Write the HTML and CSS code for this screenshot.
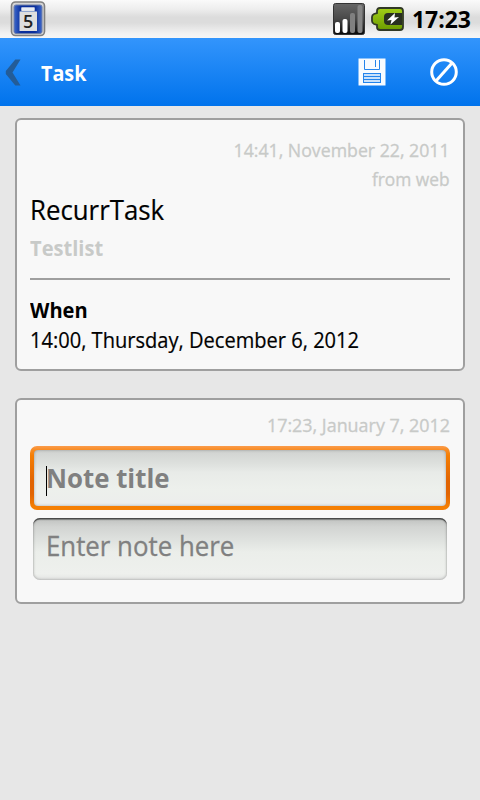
FILE: index.html
```
<!DOCTYPE html>
<html lang="en">
<head>
<meta charset="utf-8">
<title>Task</title>
<link rel="stylesheet" href="styles.css">
</head>
<body>
<div class="status">
  <svg class="app-icon" width="36" height="36" viewBox="0 0 36 36">
    <defs><linearGradient id="blue" x1="0" x2="1"><stop offset="0" stop-color="#3d68cc"/><stop offset=".25" stop-color="#0a2f9c"/><stop offset=".75" stop-color="#0a2f9c"/><stop offset="1" stop-color="#3d68cc"/></linearGradient></defs>
    <rect x="1.500" y="1" width="33" height="33.500" rx="4" fill="#d5d5d5" stroke="#808080" stroke-width="1.600"/>
    <rect x="4" y="4" width="28" height="28.500" rx="2" fill="url(#blue)" stroke="#6e7ea8"/>
    <path d="M11.500 6.500h13v4H27v19.500H9.500V10.500h2z" fill="#dedede"/>
    <path d="M11.500 6.500h13v3h-13z" fill="#e8edf5"/>
    <path d="M10.500 10.500h15" stroke="#8fa5ce"/>
    <text x="18.200" y="26.500" text-anchor="middle" class="badge-digit">5</text>
  </svg>
  <div class="status-right">
    <svg width="32" height="32" viewBox="0 0 32 32">
      <defs><linearGradient id="sig" x2="0" y2="1"><stop offset="0" stop-color="#666"/><stop offset=".5" stop-color="#484848"/><stop offset="1" stop-color="#080808"/></linearGradient></defs>
      <rect x=".5" y=".5" width="31" height="31" rx="2" fill="url(#sig)" stroke="#333"/>
      <rect x="2" y="19" width="5" height="11" rx="2" fill="#fff"/><rect x="9.500" y="16" width="5" height="14" rx="2" fill="#fff"/><rect x="17" y="10" width="5" height="20" rx="2" fill="#808080"/><rect x="24.500" y="2" width="5" height="28" rx="2" fill="#858585"/>
    </svg>
    <svg class="battery" width="33" height="24" viewBox="0 0 33 24">
      <defs><linearGradient id="bat" x2="0" y2="1"><stop offset="0" stop-color="#a2cf18"/><stop offset="1" stop-color="#6c9b00"/></linearGradient></defs>
      <path d="M9 1h20q3 0 3 3v16q0 3-3 3H9q-3 0-3-3v-2L3 17q-2-1-2-3v-4q0-2 2-3l3-1V4q0-3 3-3z" fill="url(#bat)" stroke="#303825" stroke-width="1.800"/>
      <path d="M31 6H17q-4 0-4 4v4q0 4 4 4h14z" fill="#292f20"/>
      <path d="M16 13.500 24 6l-.5 4.500 4.500-.5-8.500 7.500 1-4.500z" fill="#fff"/>
    </svg>
    <span class="clock">17:23</span>
  </div>
</div>
<div class="bar">
  <svg class="back" width="16" height="28" viewBox="0 0 16 28"><path d="M10.300 1.500H15.500L7.500 14.500l8 13h-5.200L.8 16v-3z" fill="#235c98"/></svg>
  <h1 class="bar-title"><span class="fit fit-bar">Task</span></h1>
  <svg class="save" width="28" height="28" viewBox="0 0 28 28">
    <path d="M.5.500h27v27H.5z" fill="#f7fbff"/>
    <path d="M6.500 2v9.500h15V2M17.500 2v7" fill="none" stroke="#2384ec"/>
    <path d="M5 15h18v10H5z" fill="#2384ec"/>
    <path d="M6 17h16M6 20h16M6 23h16" stroke="#fff" stroke-width="1.700"/>
  </svg>
  <svg class="cancel" width="28" height="28" viewBox="0 0 28 28"><circle cx="14" cy="14" r="12.300" fill="none" stroke="#fff" stroke-width="3"/><path d="M6.200 22.800 21.800 5.200" stroke="#fff" stroke-width="3"/></svg>
</div>
<main class="page">
  <section class="card">
    <div class="meta"><span class="fit fit-date">14:41, November 22, 2011</span></div>
    <div class="meta"><span class="fit fit-source">from web</span></div>
    <h2 class="name"><span class="fit">RecurrTask</span></h2>
    <div class="list"><span class="fit">Testlist</span></div>
    <hr class="rule">
    <div class="label"><span class="fit">When</span></div>
    <div class="when"><span class="fit">14:00, Thursday, December 6, 2012</span></div>
  </section>
  <section class="card note">
    <div class="meta"><span class="fit fit-now">17:23, January 7, 2012</span></div>
    <div class="field-focus"><div class="field-inner"><span class="caret"></span><span class="fit title-hint">Note title</span></div></div>
    <div class="field"><span class="fit note-hint">Enter note here</span></div>
  </section>
</main>
</body>
</html>
```
FILE: styles.css
```
* { box-sizing: border-box; }
body { margin: 0; width: 480px; height: 800px; overflow: hidden; background: #e7e7e7; font-family: "Open Sans", "Noto Sans", sans-serif; color: #000; }
svg { display: block; flex: none; }
.fit { display: inline-block; transform: scaleX(.956); transform-origin: left center; }
.status { height: 38px; padding: 0 9px 0 10px; display: flex; justify-content: space-between; align-items: center; background: linear-gradient(#fafafa 0, #ededed 25%, #dcdcdc 45%, #dcdcdc 60%, #f2f2f2 88%, #f6f6f6 100%); }
.badge-digit { font: 600 18px "Open Sans", sans-serif; fill: #222; }
.status-right { display: flex; align-items: center; }
.battery { margin: 0 8px 0 6px; }
.clock { width: 59px; font-size: 24px; line-height: 38px; font-weight: 700; white-space: nowrap; transform: scaleX(.955); transform-origin: left center; }
.bar { height: 68px; display: flex; align-items: center; padding: 0 22px 0 5px; background: linear-gradient(#3395fc, #0073ec); }
.bar-title { margin: 1px 0 0 20px; flex: 1; color: #fff; font-size: 21px; line-height: 30px; font-weight: 700; }
.fit-bar { transform: scaleX(.94); }
.save { margin-right: 44px; }
.page { padding: 12px 15px; display: flex; flex-direction: column; gap: 27px; }
.card { border: 2px solid #9f9f9f; border-radius: 6px; background: #f8f8f8; padding: 16px 13px 14px; white-space: nowrap; }
.meta { height: 29px; line-height: 29px; font-size: 18px; color: #c8cac8; text-align: right; -webkit-text-stroke: .3px #c8cac8; }
.meta .fit { transform-origin: right center; }
.meta .fit-date { transform: scaleX(.984); }
.meta .fit-source { transform: scaleX(.964); }
.meta .fit-now { transform: scaleX(.995); }
.name { margin: 0; font-size: 27px; line-height: 31px; font-weight: 400; -webkit-text-stroke: .2px #000; }
.list { margin-top: 8px; font-size: 21px; line-height: 30px; font-weight: 700; color: #c8cac8; }
.rule { height: 2px; margin: 15px 0; border: 0; background: #9f9f9f; }
.label { font-size: 21px; line-height: 30px; font-weight: 700; }
.when { font-size: 21px; line-height: 30px; -webkit-text-stroke: .2px #000; }
.note { padding: 10px 13px 22px; }
.note .meta { height: 30px; line-height: 30px; }
.field-focus { height: 64px; margin-top: 6px; padding: 4px; border-radius: 7px; background: linear-gradient(#fb9c4c 0, #f88c24 6%, #f57e04 15%, #e16402 55%, #e26402 75%, #f57f04 95%); }
.field-inner { height: 56px; display: flex; align-items: center; padding-left: 12px; border-radius: 4px; color: #808080; background: linear-gradient(#d0d2d0, #dde0dd 24%, #e8ebe8 40%, #edf0ec 70%, #ecedec); box-shadow: inset 0 0 3px rgba(0, 0, 0, .3); }
.caret { width: 1px; height: 30px; margin: 6px -1px 0 0; background: #000; }
.title-hint { font-size: 27px; font-weight: 700; line-height: 32px; }
.field { height: 62px; margin: 8px 3px 0; padding: 12px 13px 0; border-radius: 7px; color: #808080; background: linear-gradient(#bfc1bf, #d2d4d2 14%, #dfe2df 36%, #ebeeea 55%, #eef0ed 90%, #e2e3e2); box-shadow: inset 0 2px 1px -.5px rgba(0, 0, 0, .6), inset 0 0 3px rgba(0, 0, 0, .35); }
.note-hint { font-size: 27px; line-height: 31px; -webkit-text-stroke: .3px #808080; }
```
